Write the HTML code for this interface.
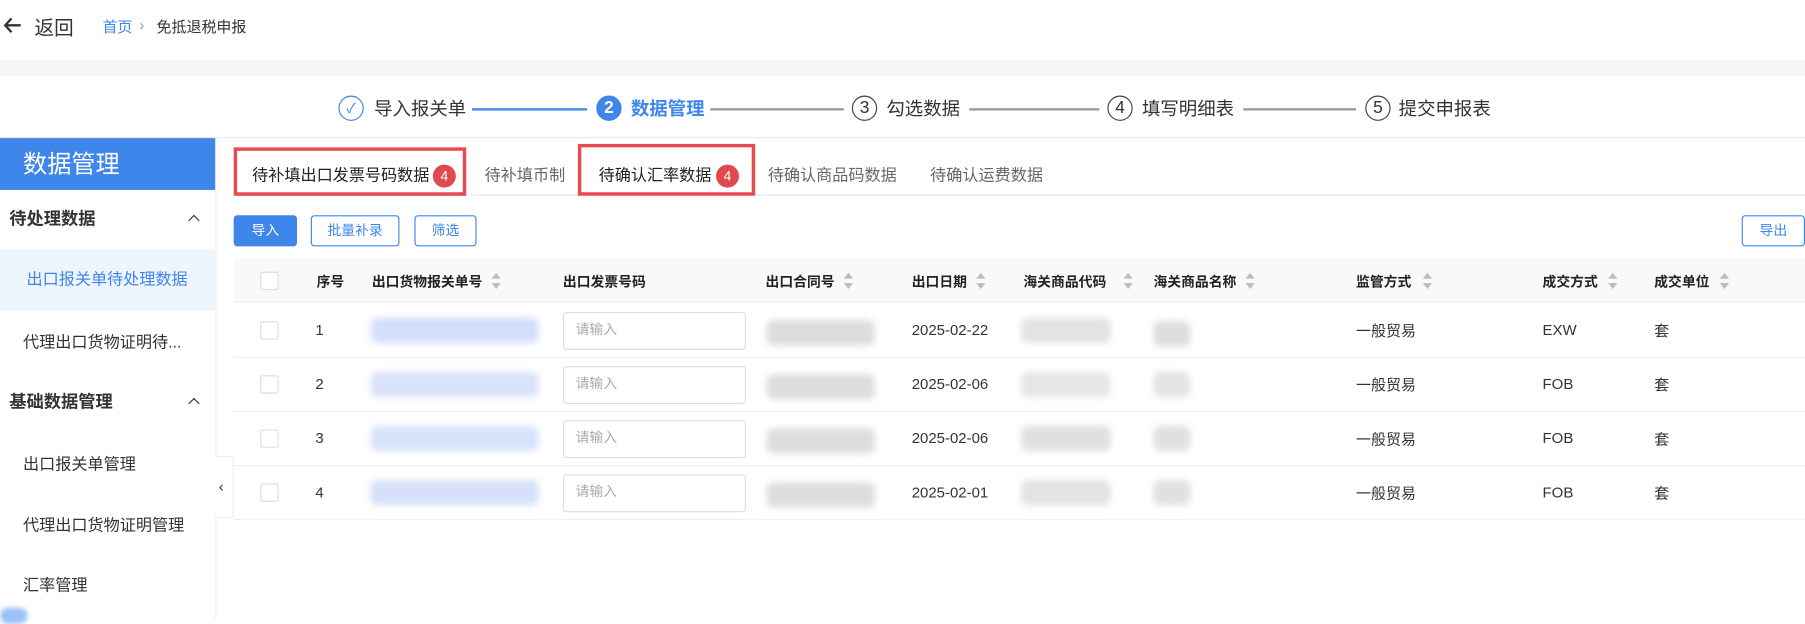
<!DOCTYPE html>
<html><head><meta charset="utf-8"><style>
*{margin:0;padding:0;box-sizing:border-box}
html,body{width:1805px;height:619px;overflow:hidden;background:#fff}
#w{position:absolute;left:0;top:0;width:1568px;height:538px;transform:scale(1.15115);transform-origin:0 0;font-family:"Liberation Sans","Noto Sans CJK SC",sans-serif;color:#333}
.a{position:absolute;white-space:nowrap}
.st{font-size:16px;color:#333;top:81px}
.ln{position:absolute;top:94px;height:2px;background:#999}
.circ{position:absolute;top:83px;width:22px;height:22px;border:1px solid #444;border-radius:50%;font-size:15px;text-align:center;line-height:20px;color:#333}
.tab{top:142px;font-size:14px;color:#666}
.badge{position:absolute;width:20px;height:20px;border-radius:50%;background:#e04a4f;color:#fff;font-size:12px;text-align:center;line-height:20px}
.rb{position:absolute;border:3px solid #e84a4f}
.btn{position:absolute;top:187px;height:27px;border:1px solid #3e86ea;border-radius:3px;color:#3e86ea;font-size:12px;text-align:center;line-height:25px}
.th{top:236px;font-size:12px;font-weight:bold;color:#222}
.sort{position:absolute;top:236px;width:8px;height:16px}
.sort:before{content:"";position:absolute;left:0;top:1px;border:4px solid transparent;border-bottom:5px solid #bbb;border-top:0}
.sort:after{content:"";position:absolute;left:0;top:10px;border:4px solid transparent;border-top:5px solid #bbb;border-bottom:0}
.cb{position:absolute;left:226px;width:16px;height:16px;border:1px solid #ddd;border-radius:2px;background:#fff}
.td{font-size:13px;color:#333}
.cj{margin-top:-2px}
.inp{position:absolute;left:489px;width:159px;height:33px;border:1px solid #ddd;border-radius:3px;font-size:12px;color:#aaa;padding-left:10px;line-height:29px}
.bl{position:absolute;height:22px;border-radius:6px;filter:blur(3px)}
.sd{font-size:14px;color:#333;left:20px}
.chev{position:absolute;width:7px;height:7px;border-left:1.5px solid #333;border-top:1.5px solid #333;transform:rotate(45deg)}
</style></head><body><div id="w">
<svg class="a" style="left:3px;top:15px" width="16" height="14" viewBox="0 0 16 14"><path d="M15 7H2M7 1L1.5 7 7 13" fill="none" stroke="#333" stroke-width="2"/></svg>
<div class="a" style="left:30px;top:10px;font-size:17px">返回</div>
<div class="a" style="left:89px;top:13px;font-size:13px;color:#3e86ea">首页</div>
<div class="a" style="left:121px;top:14px;font-size:13px;color:#999">›</div>
<div class="a" style="left:136px;top:13px;font-size:13px">免抵退税申报</div>
<div class="a" style="left:0;top:52px;width:1568px;height:14px;background:#f5f6f8"></div>
<!-- steps -->
<div class="circ" style="left:294px;border-color:#3e86ea;color:#3e86ea;font-size:12px">✓</div>
<div class="a st" style="left:325px">导入报关单</div>
<div class="ln" style="left:410px;width:100px;background:#3e86ea"></div>
<div class="circ" style="left:518px;background:#3e86ea;border-color:#3e86ea;color:#fff;font-weight:bold">2</div>
<div class="a st" style="left:548px;color:#3e86ea;font-weight:bold">数据管理</div>
<div class="ln" style="left:617px;width:116px"></div>
<div class="circ" style="left:740px">3</div>
<div class="a st" style="left:770px">勾选数据</div>
<div class="ln" style="left:842px;width:113px"></div>
<div class="circ" style="left:962px">4</div>
<div class="a st" style="left:992px">填写明细表</div>
<div class="ln" style="left:1080px;width:98px"></div>
<div class="circ" style="left:1186px">5</div>
<div class="a st" style="left:1215px">提交申报表</div>
<div class="a" style="left:0;top:119px;width:1568px;height:1px;background:#e8e8e8"></div>
<!-- sidebar -->
<div class="a" style="left:0;top:120px;width:187px;height:45px;background:#3e86ea;color:#fff;font-size:21px;padding:7px 0 0 20px">数据管理</div>
<div class="a" style="left:187px;top:120px;width:1px;height:418px;background:#eee"></div>
<div class="a" style="left:8px;top:179px;font-size:15px;font-weight:bold">待处理数据</div>
<div class="chev" style="left:165px;top:188px"></div>
<div class="a" style="left:0;top:216px;width:187px;height:54px;background:#eef5fe"></div>
<div class="a" style="left:23px;top:232px;font-size:14px;color:#3e86ea">出口报关单待处理数据</div>
<div class="a sd" style="top:287px">代理出口货物证明待...</div>
<div class="a" style="left:8px;top:338px;font-size:15px;font-weight:bold">基础数据管理</div>
<div class="chev" style="left:165px;top:347px"></div>
<div class="a sd" style="top:393px">出口报关单管理</div>
<div class="a sd" style="top:446px">代理出口货物证明管理</div>
<div class="a sd" style="top:498px">汇率管理</div>
<div class="a" style="left:187px;top:396px;width:16px;height:54px;border:1px solid #eee;border-left:0;background:#fff;font-size:13px;padding:18px 0 0 3px">‹</div>
<div class="a" style="left:0;top:528px;width:24px;height:14px;border-radius:7px;background:#9cc2f5;filter:blur(2px)"></div>
<!-- tabs -->
<div class="a" style="left:203px;top:169px;width:1365px;height:1px;background:#e5e5e5"></div>
<div class="a" style="left:205px;top:168px;width:200px;height:2px;background:#3e86ea"></div>
<div class="a tab" style="left:219px;color:#222">待补填出口发票号码数据</div>
<div class="badge" style="left:376px;top:143px">4</div>
<div class="rb" style="left:203px;top:128px;width:202px;height:42px"></div>
<div class="a tab" style="left:421px">待补填币制</div>
<div class="a tab" style="left:520px;color:#222">待确认汇率数据</div>
<div class="badge" style="left:622px;top:143px">4</div>
<div class="rb" style="left:502px;top:125px;width:154px;height:45px"></div>
<div class="a tab" style="left:667px">待确认商品码数据</div>
<div class="a tab" style="left:808px">待确认运费数据</div>
<!-- buttons -->
<div class="btn" style="left:203px;width:55px;background:#3e86ea;color:#fff">导入</div>
<div class="btn" style="left:270px;width:77px">批量补录</div>
<div class="btn" style="left:360px;width:54px">筛选</div>
<div class="btn" style="left:1513px;width:55px">导出</div>
<!-- table -->
<div class="a" style="left:203px;top:225px;width:1365px;height:38px;background:#f7f9fb;border-bottom:1px solid #eee"></div>
<div class="cb" style="top:236px"></div>
<div class="a th" style="left:275px">序号</div>
<div class="a th" style="left:323px">出口货物报关单号</div><div class="sort" style="left:427px"></div>
<div class="a th" style="left:489px">出口发票号码</div>
<div class="a th" style="left:665px">出口合同号</div><div class="sort" style="left:733px"></div>
<div class="a th" style="left:792px">出口日期</div><div class="sort" style="left:848px"></div>
<div class="a th" style="left:889px">海关商品代码</div><div class="sort" style="left:976px"></div>
<div class="a th" style="left:1002px">海关商品名称</div><div class="sort" style="left:1082px"></div>
<div class="a th" style="left:1178px">监管方式</div><div class="sort" style="left:1236px"></div>
<div class="a th" style="left:1340px">成交方式</div><div class="sort" style="left:1397px"></div>
<div class="a th" style="left:1437px">成交单位</div><div class="sort" style="left:1494px"></div>

<div class="a" style="left:203px;top:310px;width:1365px;height:1px;background:#eee"></div>
<div class="a" style="left:203px;top:357px;width:1365px;height:1px;background:#eee"></div>
<div class="a" style="left:203px;top:404px;width:1365px;height:1px;background:#eee"></div>
<div class="a" style="left:203px;top:451px;width:1365px;height:1px;background:#eee"></div>

<!-- rows -->
<div class="cb" style="top:279px"></div><div class="a td" style="left:274px;top:279px">1</div>
<div class="bl" style="left:322px;top:276px;width:146px;background:#d4defa"></div>
<div class="inp" style="top:271px">请输入</div>
<div class="bl" style="left:666px;top:278px;width:94px;background:#ddd"></div>
<div class="a td" style="left:792px;top:279px">2025-02-22</div>
<div class="bl" style="left:887px;top:276px;width:78px;background:#e3e3e3"></div>
<div class="bl" style="left:1002px;top:279px;width:32px;background:#ddd"></div>
<div class="a td cj" style="left:1178px;top:279px">一般贸易</div>
<div class="a td" style="left:1340px;top:279px">EXW</div>
<div class="a td cj" style="left:1437px;top:279px">套</div>

<div class="cb" style="top:326px"></div><div class="a td" style="left:274px;top:326px">2</div>
<div class="bl" style="left:322px;top:323px;width:146px;background:#d8e2fb"></div>
<div class="inp" style="top:318px">请输入</div>
<div class="bl" style="left:666px;top:325px;width:94px;background:#ddd"></div>
<div class="a td" style="left:792px;top:326px">2025-02-06</div>
<div class="bl" style="left:887px;top:323px;width:78px;background:#e6e6e6"></div>
<div class="bl" style="left:1002px;top:323px;width:32px;background:#e3e3e3"></div>
<div class="a td cj" style="left:1178px;top:326px">一般贸易</div>
<div class="a td" style="left:1340px;top:326px">FOB</div>
<div class="a td cj" style="left:1437px;top:326px">套</div>

<div class="cb" style="top:373px"></div><div class="a td" style="left:274px;top:373px">3</div>
<div class="bl" style="left:322px;top:370px;width:146px;background:#d8e2fb"></div>
<div class="inp" style="top:365px">请输入</div>
<div class="bl" style="left:666px;top:372px;width:94px;background:#ddd"></div>
<div class="a td" style="left:792px;top:373px">2025-02-06</div>
<div class="bl" style="left:887px;top:370px;width:78px;background:#e0e0e0"></div>
<div class="bl" style="left:1002px;top:370px;width:32px;background:#e0e0e0"></div>
<div class="a td cj" style="left:1178px;top:373px">一般贸易</div>
<div class="a td" style="left:1340px;top:373px">FOB</div>
<div class="a td cj" style="left:1437px;top:373px">套</div>

<div class="cb" style="top:420px"></div><div class="a td" style="left:274px;top:420px">4</div>
<div class="bl" style="left:322px;top:417px;width:146px;background:#d6e0fb"></div>
<div class="inp" style="top:412px">请输入</div>
<div class="bl" style="left:666px;top:419px;width:94px;background:#ddd"></div>
<div class="a td" style="left:792px;top:420px">2025-02-01</div>
<div class="bl" style="left:887px;top:417px;width:78px;background:#e3e3e3"></div>
<div class="bl" style="left:1002px;top:417px;width:32px;background:#e0e0e0"></div>
<div class="a td cj" style="left:1178px;top:420px">一般贸易</div>
<div class="a td" style="left:1340px;top:420px">FOB</div>
<div class="a td cj" style="left:1437px;top:420px">套</div>
</div></body></html>
